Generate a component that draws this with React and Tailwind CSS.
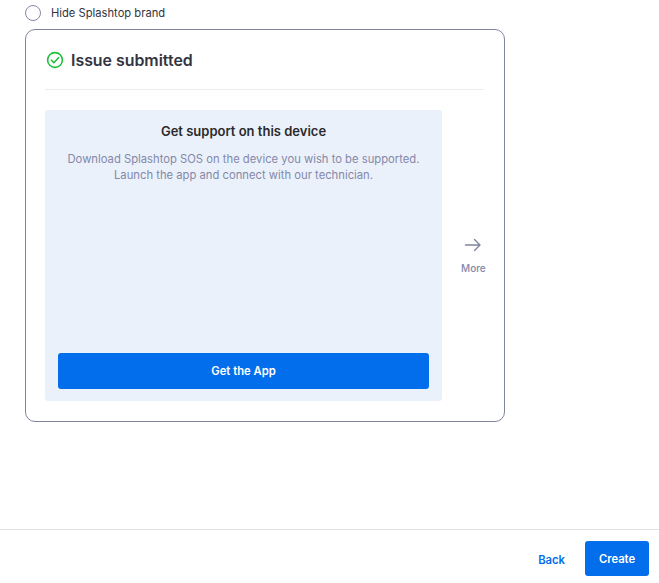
export default function App() {
  return (
    <div className="flex h-[583px] w-[659px] flex-col overflow-hidden bg-white font-['Inter',sans-serif] text-[#2b2b2b]">
      <div className="flex-1 pl-[25px]">
        <div className="flex h-[26px] items-center gap-[10px]">
          <span className="h-4 w-4 rounded-full border border-[#8488a8] bg-white" />
          <span className="text-[11.2px] leading-4 text-[#33343f]">Hide Splashtop brand</span>
        </div>
        <div className="mt-[3px] h-[393px] w-[480px] rounded-[10px] border border-[#80859f] bg-white pl-[19px] pr-5">
          <div className="flex h-[60px] items-center gap-[7px] border-b border-[#ececf0]">
            <svg width="18" height="18" viewBox="0 0 18 18" fill="none" className="ml-[1px]">
              <circle cx="9" cy="9" r="7.4" stroke="#1fc13c" strokeWidth="1.6" />
              <path d="M5.4 9.2l2.5 2.5 4.6-5" stroke="#1fc13c" strokeWidth="1.6" strokeLinecap="round" strokeLinejoin="round" />
            </svg>
            <h2 className="mt-[2px] text-[15.9px] font-semibold leading-6 text-[#33343f]">Issue submitted</h2>
          </div>
          <div className="mt-5 flex">
            <div className="flex h-[291px] w-[397px] shrink-0 flex-col rounded-[3px] bg-[#eaf1fb] px-[13px] pb-3 pt-[13px]">
              <h3 className="text-center text-[13px] font-semibold leading-4 text-[#2b2b2b]">Get support on this device</h3>
              <p className="mt-3 text-center text-[11.25px] leading-4 text-[#8488a8]">
                Download Splashtop SOS on the device you wish to be supported.
                <br />
                Launch the app and connect with our technician.
              </p>
              <button className="mt-auto h-9 w-full rounded-[3px] bg-[#026eeb] text-[11.25px] font-semibold text-white">Get the App</button>
            </div>
            <div className="ml-[19px] flex shrink-0 flex-col items-center gap-2 pt-[128px]">
              <svg width="18" height="14" viewBox="0 0 18 14" fill="none">
                <path d="M1.5 7h14.5M10.5 1.5L16 7l-5.5 5.5" stroke="#80859f" strokeWidth="1.4" strokeLinecap="round" strokeLinejoin="round" />
              </svg>
              <span className="text-[10px] font-medium leading-4 text-[#8488a8]">More</span>
            </div>
          </div>
        </div>
      </div>
      <div className="flex h-[54px] items-start justify-end gap-[20px] border-t border-[#e2e2e6] pr-[10px] pt-[11px]">
        <button className="mt-[11px] text-[11.25px] font-semibold text-[#026eeb]">Back</button>
        <button className="h-[35px] w-[64px] rounded-[3px] bg-[#026eeb] pt-[1px] text-[11.25px] font-semibold text-white">Create</button>
      </div>
    </div>
  );
}
